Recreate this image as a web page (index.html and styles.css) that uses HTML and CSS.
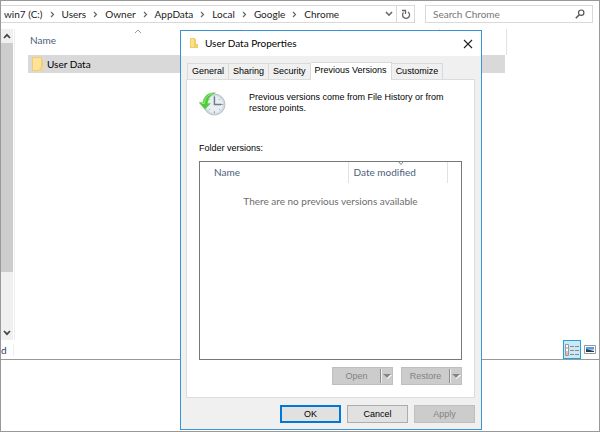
FILE: index.html
```html
<!DOCTYPE html>
<html lang="en">
<head>
    <meta charset="UTF-8">
    <meta name="viewport" content="width=device-width, initial-scale=1.0">
    <title>Chrome - User Data Properties</title>
    <link rel="stylesheet" href="styles.css">
</head>
<body>
    <main class="explorer">
        <div class="toolbar">
            <nav class="address-bar" aria-label="Address">
                <a href="#">win7 (C:)</a>
                <svg class="chevron" viewBox="0 0 5 7"><path d="M1 1l2.5 2.5L1 6"/></svg>
                <a href="#">Users</a>
                <svg class="chevron" viewBox="0 0 5 7"><path d="M1 1l2.5 2.5L1 6"/></svg>
                <a href="#">Owner</a>
                <svg class="chevron" viewBox="0 0 5 7"><path d="M1 1l2.5 2.5L1 6"/></svg>
                <a href="#">AppData</a>
                <svg class="chevron" viewBox="0 0 5 7"><path d="M1 1l2.5 2.5L1 6"/></svg>
                <a href="#">Local</a>
                <svg class="chevron" viewBox="0 0 5 7"><path d="M1 1l2.5 2.5L1 6"/></svg>
                <a href="#">Google</a>
                <svg class="chevron" viewBox="0 0 5 7"><path d="M1 1l2.5 2.5L1 6"/></svg>
                <a href="#">Chrome</a>
                <button class="icon-btn history-btn" aria-label="Previous locations">
                    <svg width="8" height="6" viewBox="0 0 8 6"><path d="M1 1l3 3.200 3-3.200" fill="none" stroke="#666" stroke-width="1.600"/></svg>
                </button>
                <button class="icon-btn refresh-btn" aria-label="Refresh">
                    <svg width="10" height="11" viewBox="0 0 10 11"><path d="M7 3A3.500 3.500 0 1 1 2.500 3.500M1 1.500h3.500v3.500" fill="none" stroke="#666" stroke-width="1.300"/></svg>
                </button>
            </nav>
            <label class="search-box">
                <input type="search" placeholder="Search Chrome" aria-label="Search Chrome">
                <svg width="10" height="10" viewBox="0 0 10 10"><circle cx="6.200" cy="3.700" r="2.700" fill="none" stroke="#555" stroke-width="1.200"/><path d="M4.200 5.800L.8 9.200" stroke="#555" stroke-width="1.600"/></svg>
            </label>
        </div>

        <div class="content">
            <div class="scrollbar">
                <svg width="8" height="6" viewBox="0 0 8 6"><path d="M1 5l3-3.200L7 5" fill="none" stroke="#444" stroke-width="1.700"/></svg>
                <div class="scroll-track"><div class="scroll-thumb"></div></div>
                <svg width="8" height="6" viewBox="0 0 8 6"><path d="M1 1l3 3.200L7 1" fill="none" stroke="#444" stroke-width="1.700"/></svg>
            </div>
            <div class="file-pane">
                <table class="file-list">
                    <thead>
                        <tr>
                            <th class="col-file">
                                <svg class="sort-mark" width="8" height="5" viewBox="0 0 8 5"><path d="M1 4l3-3 3 3" fill="none" stroke="#999"/></svg>
                                Name
                            </th>
                            <th class="col-detail"></th>
                            <th class="col-detail"></th>
                            <th></th>
                        </tr>
                    </thead>
                    <tbody>
                        <tr>
                            <td colspan="4">
                                <div class="file-name">
                                    <svg width="11" height="14" viewBox="0 0 11 14"><path d="M0 0h10v3h1v11H0z" fill="#f0cd72"/><path d="M1 1h8v12H1z" fill="#fde398"/><path d="M9 9h2v5H6z" fill="#f6d478"/></svg>
                                    User Data
                                </div>
                            </td>
                        </tr>
                    </tbody>
                </table>
            </div>
        </div>

        <footer class="status-bar">
            <span class="status-text">d</span>
            <button class="view-btn active" aria-label="Details view">
                <svg width="14" height="12" viewBox="0 0 14 12"><path d="M.5.5h3v11h-3zM.5 4h3M.5 8h3" fill="#fff" stroke="#999"/><path d="M5 2.500h4M5 6.500h4M5 10.500h4M10 2.500h4M10 6.500h4M10 10.500h4" stroke="#888"/><path d="M1 9h2v2H1z" fill="#efb98f"/></svg>
            </button>
            <button class="view-btn" aria-label="Large icons view">
                <svg width="12" height="9" viewBox="0 0 12 9"><path d="M.5.5h11v8H.5z" fill="#fff" stroke="#999"/><path d="M2 2h8v2H2z" fill="#4f9df5"/><path d="M2 4h8v1H2z" fill="#9ec2df"/><path d="M2 4l8 2v1H2z" fill="#293b4b"/></svg>
            </button>
        </footer>

        <div class="lower-area"></div>
    </main>

    <section class="dialog" role="dialog" aria-labelledby="dialog-title">
        <header class="title-bar">
            <svg width="8" height="11" viewBox="0 0 8 11"><path d="M0 0h5v1h1v5h2v4H0z" fill="#f3cd67"/><path d="M1 1h3v8H1z" fill="#fde08c"/></svg>
            <h1 id="dialog-title">User Data Properties</h1>
            <button class="icon-btn" aria-label="Close">
                <svg width="10" height="10" viewBox="0 0 10 10"><path d="M1 1l8 8M9 1L1 9" stroke="#222" stroke-width="1.100"/></svg>
            </button>
        </header>

        <div class="tabs" role="tablist">
            <button class="tab" role="tab">General</button>
            <button class="tab" role="tab">Sharing</button>
            <button class="tab" role="tab">Security</button>
            <button class="tab active" role="tab" aria-selected="true">Previous Versions</button>
            <button class="tab" role="tab">Customize</button>
        </div>

        <div class="tab-panel" role="tabpanel">
            <div class="intro">
                <svg width="27" height="24" viewBox="0 0 28 25">
                    <circle cx="16" cy="13" r="11" fill="#d3dbe1" stroke="#b4bdc4"/>
                    <circle cx="16" cy="13" r="9" fill="#e8eef2"/>
                    <path d="M16 4v2M16 20v2M7 13h2M23 13h2M10 7l1 1M22 7l-1 1M10 19l1-1M22 19l-1-1" stroke="#8d979f"/>
                    <path d="M16 5v8h7" fill="none" stroke="#6b7d8c" stroke-width="1.500"/>
                    <path d="M17 1C10 0 5 4 4 11H0l6 7 6-6H9c0-5 3-9 8-11z" fill="#4fcb3d" stroke="#6fcf63" stroke-width=".5"/>
                    <path d="M14 1.800C9 3 6 6 5.500 12H3" fill="none" stroke="#a1ee8c"/>
                </svg>
                <p>Previous versions come from File History or from restore points.</p>
            </div>
            <h2 id="versions-label">Folder versions:</h2>
            <div class="versions">
                <table aria-labelledby="versions-label">
                    <thead>
                        <tr>
                            <th class="col-name">Name</th>
                            <th class="col-date">
                                <svg class="sort-mark" width="6" height="4" viewBox="0 0 6 4"><path d="M1 0l2 2.500L5 0" fill="none" stroke="#888"/></svg>
                                Date modified
                            </th>
                            <th></th>
                        </tr>
                    </thead>
                    <tbody>
                        <tr><td colspan="3">There are no previous versions available</td></tr>
                    </tbody>
                </table>
            </div>
            <div class="version-actions">
                <button class="btn split" disabled><span>Open</span><svg width="12" height="14" viewBox="0 0 12 14"><path d="M.5 0v14" stroke="#8d8d8d"/><path d="M1.500 0v14" stroke="#eee"/><path d="M4 6h8L7.500 10z" fill="#fff"/><path d="M3 5h8L7 9z" fill="#858585"/></svg></button>
                <button class="btn split" disabled><span>Restore</span><svg width="12" height="14" viewBox="0 0 12 14"><path d="M.5 0v14" stroke="#8d8d8d"/><path d="M1.500 0v14" stroke="#eee"/><path d="M4 6h8L7.500 10z" fill="#fff"/><path d="M3 5h8L7 9z" fill="#858585"/></svg></button>
            </div>
        </div>

        <div class="dialog-actions">
            <button class="btn btn-default">OK</button>
            <button class="btn">Cancel</button>
            <button class="btn" disabled>Apply</button>
        </div>
    </section>
</body>
</html>
```
FILE: styles.css
```css
* {
    margin: 0;
    padding: 0;
    box-sizing: border-box;
}

body {
    font-family: Lato, "Open Sans", sans-serif;
    font-size: 10px;
    line-height: 16px;
    color: #222;
    background: #fff;
}

button,
input {
    font: inherit;
    color: inherit;
}

svg {
    display: block;
    flex: none;
}

.icon-btn {
    display: flex;
    align-items: center;
    justify-content: center;
    border: none;
    background: none;
}

/* Explorer window */
.explorer {
    display: flex;
    flex-direction: column;
    height: 100vh;
    border: 1px solid #999;
}

.toolbar {
    display: flex;
    gap: 10px;
    padding: 4px 6px 6px 0;
}

.address-bar {
    display: flex;
    align-items: center;
    flex: 1;
    height: 18px;
    padding-left: 3px;
    border: 1px solid #d9d9d9;
    border-left: none;
}

.address-bar a {
    color: #222;
    text-decoration: none;
    white-space: nowrap;
}

.chevron {
    width: 5px;
    height: 7px;
    margin: 0 7px;
    fill: none;
    stroke: #666;
    stroke-width: 1.2;
}

.history-btn {
    width: 14px;
    margin-left: auto;
}

.refresh-btn {
    width: 18px;
    height: 16px;
    border-left: 1px solid #d9d9d9;
}

.search-box {
    display: flex;
    align-items: center;
    width: 168px;
    height: 18px;
    padding: 0 7px;
    border: 1px solid #d9d9d9;
}

.search-box input {
    flex: 1;
    min-width: 0;
    border: none;
    outline: none;
    background: none;
}

.search-box input::placeholder {
    color: #767676;
}

.content {
    display: flex;
    flex: 1;
}

.scrollbar {
    display: flex;
    flex-direction: column;
    align-items: center;
    gap: 4px;
    width: 12px;
    padding: 4px 0;
    background: #f0f0f0;
}

.scroll-track {
    flex: 1;
    align-self: stretch;
}

.scroll-thumb {
    height: 81%;
    background: #cdcdcd;
}

.file-pane {
    flex: 1;
    margin-left: 1px;
    padding: 0 92px 0 13px;
    border-left: 1px solid #eee;
}

.file-list {
    width: 100%;
    border-collapse: collapse;
    table-layout: fixed;
}

.file-list th {
    position: relative;
    height: 26px;
    padding: 2px 2px 6px;
    border-right: 1px solid #e2e2e2;
    color: #4c607a;
    font-weight: 400;
    text-align: left;
}

.file-list .col-file {
    width: 213px;
}

.file-list .col-detail {
    width: 99px;
}

.sort-mark {
    position: absolute;
    top: 0;
    left: 50%;
}

.file-name {
    display: flex;
    align-items: center;
    gap: 4px;
    height: 18px;
    margin-right: 2px;
    padding-left: 4px;
    background: #d9d9d9;
    color: #000;
}

.status-bar {
    display: flex;
    align-items: center;
    gap: 2px;
    height: 20px;
    padding-right: 2px;
    border-bottom: 1px solid #999;
}

.status-text {
    width: 13px;
    margin-right: auto;
    border-right: 1px solid #eee;
    color: #1e3a6e;
    line-height: 12px;
}

.view-btn {
    display: flex;
    align-items: center;
    justify-content: center;
    width: 14px;
    height: 18px;
    border: none;
    background: none;
}

.view-btn.active {
    width: 18px;
    height: 19px;
    border: 1px solid #26a0da;
    background: #cbe8f6;
}

.lower-area {
    height: 71px;
}

/* Properties dialog */
.dialog {
    position: absolute;
    top: 30px;
    right: 118px;
    bottom: 2px;
    left: 180px;
    display: flex;
    flex-direction: column;
    padding: 0 6px 6px 5px;
    border: 1px solid #3a93d6;
    background: #f0f0f0;
    font-family: "Liberation Sans", Arial, sans-serif;
    font-size: 9px;
    line-height: 11px;
    color: #000;
}

.title-bar {
    display: flex;
    align-items: center;
    gap: 7px;
    height: 25px;
    margin: 0 -6px 6px -5px;
    padding: 0 8px 0 9px;
    background: #fff;
}

.title-bar h1 {
    flex: 1;
    font-family: Lato, "Open Sans", sans-serif;
    font-size: 10px;
    font-weight: 400;
}

.tabs {
    display: flex;
    align-items: flex-end;
    padding-left: 1px;
}

.tab {
    height: 16px;
    padding: 0 4px;
    border: 1px solid #d9d9d9;
    border-bottom: none;
    border-left: none;
    background: #f0f0f0;
    white-space: nowrap;
}

.tab:first-child {
    border-left: 1px solid #d9d9d9;
}

.tab.active {
    position: relative;
    height: 18px;
    margin-bottom: -1px;
    padding-bottom: 2px;
    background: #fff;
}

.tab-panel {
    display: flex;
    flex: 1;
    flex-direction: column;
    padding: 12px;
    border: 1px solid #dcdcdc;
    background: #fff;
}

.intro {
    display: flex;
    gap: 23px;
    height: 51px;
}

.intro p {
    flex: 1;
}

.tab-panel h2 {
    margin-bottom: 7px;
    font-size: 9px;
    font-weight: 400;
}

.versions {
    flex: 1;
    border: 1px solid #777;
    font-family: Lato, "Open Sans", sans-serif;
    font-size: 10px;
    color: #6d6d6d;
}

.versions table {
    width: 100%;
    border-collapse: collapse;
    table-layout: fixed;
}

.versions th {
    position: relative;
    height: 21px;
    padding-left: 5px;
    color: #4c607a;
    font-weight: 400;
    text-align: left;
}

.versions th + th {
    border-left: 1px solid #e2e2e2;
}

.versions .col-name {
    width: 148px;
    padding-left: 14px;
}

.versions .col-date {
    width: 99px;
}

.versions td {
    padding-top: 13px;
    text-align: center;
}

.version-actions,
.dialog-actions {
    display: flex;
    justify-content: flex-end;
    gap: 8px;
}

.version-actions {
    margin-top: 7px;
}

.dialog-actions {
    gap: 6px;
    margin-top: 7px;
}

.btn {
    width: 61px;
    height: 18px;
    border: 1px solid #adadad;
    background: #e1e1e1;
}

.btn-default {
    border: 2px solid #0078d7;
}

.btn:disabled {
    border-color: #bfbfbf;
    background: #ccc;
    color: #838383;
}

.split {
    display: flex;
    align-items: center;
}

.split span {
    flex: 1;
}
```
